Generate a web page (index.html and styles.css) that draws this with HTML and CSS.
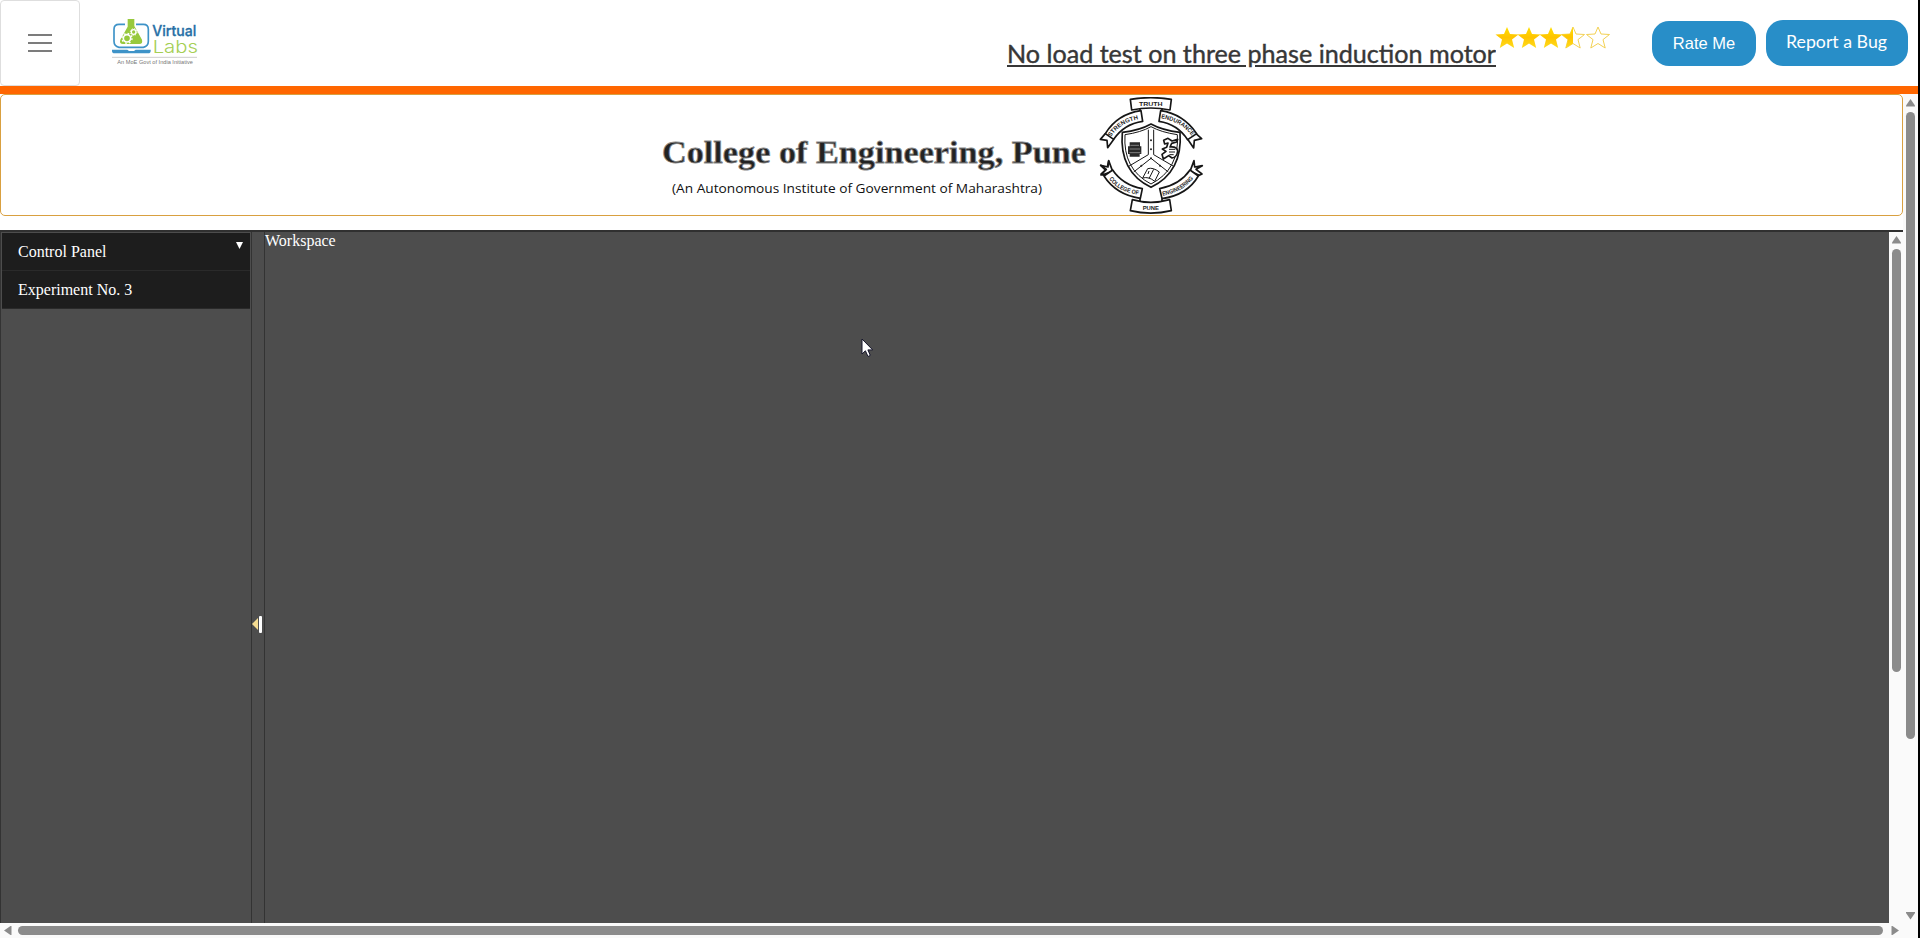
FILE: index.html
```html
<!DOCTYPE html>
<html lang="en">
<head>
<meta charset="utf-8">
<title>Virtual Labs</title>
<link rel="stylesheet" href="styles.css">
</head>
<body>
<div class="page">
  <header class="header">
    <button class="menu" aria-label="Menu"><span></span><span></span><span></span></button>
    <svg class="logo" viewBox="330 51 270 150">
      <path d="M375 73H357Q342 73 342 88V124Q342 139 357 142H430Q445 139 445 124V88Q445 73 430 73H408" fill="none" stroke="#3e93c8" stroke-width="5"/>
      <path d="M383 57H403V78L426 119Q429 132 418 132H369Q357 132 361 119L383 80Z" fill="#97c93d"/>
      <circle cx="381" cy="115" r="11" fill="none" stroke="#fff" stroke-width="5"/>
      <circle cx="381" cy="115" r="15" fill="none" stroke="#fff" stroke-width="4" stroke-dasharray="5 6.8"/>
      <circle cx="401" cy="96" r="7" fill="none" stroke="#fff" stroke-width="4"/>
      <circle cx="401" cy="96" r="10" fill="none" stroke="#fff" stroke-width="3" stroke-dasharray="4 3.8"/>
      <path d="M336 149H382L387 153H402L407 149H452V153Q452 160 444 160H344Q336 160 336 153Z" fill="#3e93c8"/>
      <text x="457" y="108" class="logo-virtual" textLength="132" lengthAdjust="spacingAndGlyphs">Virtual</text>
      <text x="458" y="159" class="logo-labs" textLength="136" lengthAdjust="spacingAndGlyphs">Labs</text>
      <path d="M336 172H591" stroke="#b5b5b5" stroke-width="2"/>
      <text x="352" y="193" class="logo-tag" textLength="227" lengthAdjust="spacingAndGlyphs">An MoE Govt of India Initiative</text>
    </svg>
    <h1 class="title"><svg width="489" height="44" viewBox="0 0 489 44"><text x="0" y="33" textLength="489" lengthAdjust="spacingAndGlyphs">No load test on three phase induction motor</text><path d="M0 36H239M248 36H489" stroke="#373737" stroke-width="2"/></svg></h1>
    <svg class="stars" viewBox="0 0 114 24">
      <defs>
        <linearGradient id="gold" x2="0" y2="1"><stop stop-color="#ffe000"/><stop offset=".5" stop-color="#ffc400"/><stop offset="1" stop-color="#ffdc1c"/></linearGradient>
        <path id="star" d="M11 1L14 8L22.500 8.500L16 13.600L18.200 22L11 17.500L3.800 22L6 13.600L-.5 8.500L8 8Z"/>
      </defs>
      <use href="#star" fill="url(#gold)"/>
      <use href="#star" x="22" fill="url(#gold)"/>
      <use href="#star" x="44" fill="url(#gold)"/>
      <use href="#star" x="66" fill="none" stroke="#f3d154"/>
      <path d="M77 1V17.500L69.800 22L72 13.600L65.500 8.500L74 8Z" fill="url(#gold)"/>
      <use href="#star" x="91" fill="none" stroke="#f3d154"/>
    </svg>
    <button class="btn rate">Rate Me</button>
    <button class="btn bug"><svg width="102" height="30"><text x="0" y="20" textLength="101" lengthAdjust="spacingAndGlyphs">Report a Bug</text></svg></button>
  </header>
  <div class="body">
    <main class="main">
      <section class="banner">
        <svg class="college" viewBox="0 0 430 80">
          <text x="1" y="36" class="college-name" textLength="424" lengthAdjust="spacingAndGlyphs">College of Engineering, Pune</text>
          <text x="11" y="66" class="college-sub" textLength="370" lengthAdjust="spacingAndGlyphs">(An Autonomous Institute of Government of Maharashtra)</text>
        </svg>
        <svg class="crest" viewBox="54 21 318 354">
          <defs>
            <path id="p1" d="M92 141Q122 96 180 87"/>
            <path id="p2" d="M243 85Q305 95 337 140"/>
            <path id="p3" d="M87 266Q113 306 180 315"/>
            <path id="p4" d="M248 317Q310 306 343 262"/>
          </defs>
          <g fill="#fff" stroke="#161616" stroke-width="5" stroke-linejoin="round">
            <path d="M76 131L61 148L81 151L83 173L102 147M348 131L365 146L343 151L341 174L322 146"/>
            <path d="M87 236L86 213L81 235L62 226L76 240L63 252L72 256Z"/>
            <path d="M68 254L63 255L79 238L62 226L84 231L86 212L98 244Z"/>
            <path d="M358 256L366 252L348 238L367 227L344 231L342 212L330 244Z"/>
            <path d="M76 131Q112 72 183 62L188 94Q132 102 101 148Z"/>
            <path d="M242 62Q310 72 350 131L323 149Q292 102 237 94Z"/>
            <path d="M72 258L98 240Q128 285 187 296L181 325Q108 314 72 258Z"/>
            <path d="M330 240L355 258Q322 315 246 326L239 296Q300 284 330 240Z"/>
            <path d="M180 61V48H246V61M180 325V344H246V326" fill="none"/>
            <path d="M151 28Q212 18 274 28L270 60Q212 48 155 60Z"/>
            <path d="M157 329Q212 345 269 329L274 362Q212 377 151 362Z"/>
            <path d="M127 127Q180 121 213 102Q247 121 300 127Q309 245 213 292Q117 245 127 127Z"/>
            <path d="M135 134Q183 127 213 110Q244 127 292 134Q299 238 213 282Q128 238 135 134Z" stroke-width="3"/>
            <path d="M205 119V194L146 229M221 119V194L281 229M161 246L213 205L265 246" fill="none" stroke-width="3"/>
            <path d="M203 236Q219 231 238 246L224 274Q207 259 188 264ZM221 238L207 266M207 243L204 252" stroke-width="3"/>
          </g>
          <path d="M149 157H180V169H184V192H179V200H149V192H144V169H149Z" fill="#292929"/>
          <path d="M151 166H177M149 177H180M148 188H181" stroke="#aaa" stroke-width="2"/>
          <path d="M251 151L264 145L276 153L293 148L290 156L275 160L270 171Q291 169 293 183Q291 202 276 204L266 197L250 207L246 193L258 184L247 177L260 172L264 159L254 162Z" fill="#fff" stroke="#171717" stroke-width="5" stroke-linejoin="round"/>
          <path d="M267 178H286M267 186H285M268 194H281" stroke="#171717" stroke-width="3"/>
          <g fill="#222"><circle cx="213" cy="151" r="3"/><circle cx="213" cy="178" r="3"/><circle cx="213" cy="205" r="3"/><circle cx="184" cy="227" r="3"/><circle cx="240" cy="227" r="3"/></g>
          <g class="crest-text">
            <text x="177" y="48" textLength="71" lengthAdjust="spacingAndGlyphs">TRUTH</text>
            <text><textPath href="#p1" textLength="101" lengthAdjust="spacingAndGlyphs">STRENGTH</textPath></text>
            <text><textPath href="#p2" textLength="110" lengthAdjust="spacingAndGlyphs">ENDURANCE</textPath></text>
            <text><textPath href="#p3" textLength="104" lengthAdjust="spacingAndGlyphs">COLLEGE OF</textPath></text>
            <text><textPath href="#p4" textLength="108" lengthAdjust="spacingAndGlyphs">ENGINEERING</textPath></text>
            <text x="188" y="361" textLength="49" lengthAdjust="spacingAndGlyphs">PUNE</text>
          </g>
        </svg>
      </section>
      <section class="lab">
        <aside class="sidebar">
          <div class="row"><span>Control Panel</span><svg width="7" height="7"><path d="M0 0H7L3.500 7Z" fill="#fff"/></svg></div>
          <div class="row"><span>Experiment No. 3</span></div>
        </aside>
        <div class="splitter"><svg width="12" height="20"><path d="M7 4V16L1 10Z" fill="#f5dc91"/><rect x="8" y="2" width="3" height="17" rx="1" fill="#fff"/></svg></div>
        <div class="workspace"><span>Workspace</span></div>
        <div class="vbar inner">
          <svg width="9" height="8"><path d="M4.500 0L9 6.500V7.500H0V6.500Z" fill="#8b8b8b"/></svg>
          <div class="thumb"></div>
        </div>
      </section>
      <div class="hbar">
        <svg width="8" height="9"><path d="M0 4.500L6.500 0H7.500V9H6.500Z" fill="#8b8b8b"/></svg>
        <div class="thumb"></div>
        <svg width="8" height="9"><path d="M8 4.500L1.500 0H.5V9H1.500Z" fill="#8b8b8b"/></svg>
      </div>
    </main>
    <div class="vbar outer">
      <svg width="9" height="8"><path d="M4.500 0L9 6.500V7.500H0V6.500Z" fill="#8b8b8b"/></svg>
      <div class="thumb"></div>
      <svg class="down" width="9" height="8"><path d="M4.500 7.500L9 1V0H0V1Z" fill="#8b8b8b"/></svg>
    </div>
  </div>
</div>
<svg class="cursor" width="13" height="20" viewBox="0 0 13 20"><path d="M1 1V16L4.400 12.800L7 18.500L9.300 17.400L6.900 11.900H11.700Z" fill="#fff" stroke="#15152b" stroke-width="1"/></svg>
</body>
</html>
```
FILE: styles.css
```css
* { box-sizing: border-box; }
body { margin: 0; height: 938px; overflow: hidden; background: #fff; font-family: "Liberation Serif", serif; }
svg { display: block; flex: none; }
button { margin: 0; border: 0; padding: 0; }

.page { height: 938px; display: flex; flex-direction: column; border-right: 2px solid #000; }

/* Top bar */
.header { height: 94px; flex: none; display: flex; align-items: flex-start; border-bottom: 8px solid #ff6600; }
.menu { width: 80px; height: 86px; background: #fff; border: 1px solid #dedede; border-radius: 4px; display: flex; flex-direction: column; align-items: center; justify-content: center; gap: 6px; }
.menu span { width: 24px; height: 2px; background: #7c7c7c; }
.logo { width: 90px; height: 50px; margin: 17px 0 0 30px; overflow: visible; }
.logo-virtual { font: 500 44px "Inter", sans-serif; fill: #276fa6; stroke: #276fa6; stroke-width: 1; }
.logo-labs { font: 300 50px "Inter", sans-serif; fill: #a5cf55; }
.logo-tag { font: 16px "Liberation Sans", sans-serif; fill: #777; }
.title { margin: 30px 0 0 auto; font: 400 24.500px "Lato", sans-serif; }
.title text { fill: #373737; stroke: #373737; stroke-width: .4; }
.stars { width: 114px; height: 24px; margin-top: 26px; overflow: visible; }
.btn { background: #288ec8; color: #fff; border-radius: 17px; display: flex; align-items: center; justify-content: center; }
.rate { width: 104px; height: 45px; margin: 21px 0 0 42px; font: 500 16.500px "Liberation Sans", sans-serif; }
.bug { width: 142px; height: 46px; margin: 20px 10px 0 10px; font: 16.500px "Lato", sans-serif; }
.bug text { fill: #fff; }

/* Scrolled content */
.body { flex: 1; min-height: 0; display: flex; }
.main { flex: 1; min-width: 0; display: flex; flex-direction: column; }
.banner { height: 122px; flex: none; border: 1px solid #d9a040; border-radius: 5px; display: flex; padding-left: 660px; }
.college { width: 430px; height: 80px; margin-top: 32px; }
.college-name { font: bold 31px "Liberation Serif", serif; fill: #222; stroke: #888; stroke-width: .8; }
.college-sub { font: 13.500px "Open Sans", sans-serif; fill: #111; }
.crest { width: 106px; height: 118px; margin: 2px 0 0 7px; }
.crest-text { font: bold 18px "Liberation Sans", sans-serif; fill: #222; }

/* Lab panes */
.lab { flex: 1; min-height: 0; margin-top: 14px; border-top: 2px solid #303030; display: flex; background: #4d4d4d; }
.sidebar { width: 252px; border: solid #333; border-width: 0 1px; padding: 1px 1px 0 1px; }
.row { height: 38px; padding: 0 7px 0 16px; background: #1d1d1d; color: #fff; font-size: 16px; line-height: 38px; display: flex; justify-content: space-between; border-bottom: 1px solid #2a2a2a; }
.row svg { margin-top: 9px; }
.splitter { width: 13px; border-right: 1px solid #333; display: flex; align-items: center; padding-top: 92px; }
.splitter svg { margin-left: -1px; }
.workspace { flex: 1; color: #fff; font-size: 16px; line-height: 17px; }

/* Scrollbars */
.vbar { width: 15px; background: #fafafa; display: flex; flex-direction: column; align-items: center; }
.thumb { background: #8b8b8b; border-radius: 5px; }
.vbar .thumb { width: 9px; }
.inner { width: 14px; padding-top: 4px; }
.inner .thumb { height: 423px; margin-top: 5px; }
.outer { padding-top: 5px; }
.outer .thumb { height: 627px; margin-top: 5px; }
.outer .down { margin: auto 0 18px; }
.hbar { height: 15px; flex: none; background: #fafafa; display: flex; align-items: center; padding-left: 4px; }
.hbar .thumb { width: 1865px; height: 9px; margin: 0 8px 0 6px; }

.cursor { position: absolute; left: 861px; top: 338px; }
```
